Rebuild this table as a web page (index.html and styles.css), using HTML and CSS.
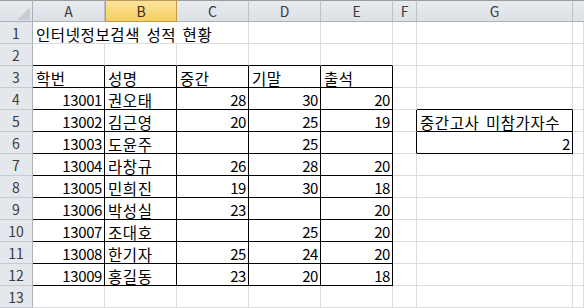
FILE: index.html
```html
<!DOCTYPE html>
<html lang="ko">
<head>
<meta charset="utf-8">
<title>성적 현황</title>
<link rel="stylesheet" href="styles.css">
</head>
<body>
<div class="sheet">
  <!-- column headers -->
  <div class="corner"><span class="tri"></span></div>
  <div class="ch">A</div><div class="ch sel">B</div><div class="ch">C</div><div class="ch">D</div><div class="ch">E</div><div class="ch">F</div><div class="ch">G</div><div class="ch last"></div>

  <!-- row 1 -->
  <div class="rh">1</div>
  <div class="cell title">인터넷정보검색 성적 현황</div><div class="cell"></div><div class="cell"></div><div class="cell"></div><div class="cell"></div><div class="cell"></div>

  <!-- row 2 -->
  <div class="rh">2</div>
  <div class="cell line-b"></div><div class="cell line-b"></div><div class="cell line-b"></div><div class="cell line-b"></div><div class="cell line-b"></div><div class="cell"></div><div class="cell"></div><div class="cell"></div>

  <!-- row 3 -->
  <div class="rh">3</div>
  <div class="cell box">학번</div><div class="cell box">성명</div><div class="cell box">중간</div><div class="cell box">기말</div><div class="cell box">출석</div><div class="cell"></div><div class="cell"></div><div class="cell"></div>

  <!-- row 4 -->
  <div class="rh">4</div>
  <div class="cell box num">13001</div><div class="cell box">권오태</div><div class="cell box num">28</div><div class="cell box num">30</div><div class="cell box num">20</div><div class="cell"></div><div class="cell line-b"></div><div class="cell"></div>

  <!-- row 5 -->
  <div class="rh">5</div>
  <div class="cell box num">13002</div><div class="cell box">김근영</div><div class="cell box num">20</div><div class="cell box num">25</div><div class="cell box num">19</div><div class="cell line-r"></div><div class="cell box">중간고사 미참가자수</div><div class="cell"></div>

  <!-- row 6 -->
  <div class="rh">6</div>
  <div class="cell box num">13003</div><div class="cell box">도윤주</div><div class="cell box num"></div><div class="cell box num">25</div><div class="cell box num"></div><div class="cell line-r"></div><div class="cell box num">2</div><div class="cell"></div>

  <!-- row 7 -->
  <div class="rh">7</div>
  <div class="cell box num">13004</div><div class="cell box">라창규</div><div class="cell box num">26</div><div class="cell box num">28</div><div class="cell box num">20</div><div class="cell"></div><div class="cell"></div><div class="cell"></div>

  <!-- row 8 -->
  <div class="rh">8</div>
  <div class="cell box num">13005</div><div class="cell box">민희진</div><div class="cell box num">19</div><div class="cell box num">30</div><div class="cell box num">18</div><div class="cell"></div><div class="cell"></div><div class="cell"></div>

  <!-- row 9 -->
  <div class="rh">9</div>
  <div class="cell box num">13006</div><div class="cell box">박성실</div><div class="cell box num">23</div><div class="cell box num"></div><div class="cell box num">20</div><div class="cell"></div><div class="cell"></div><div class="cell"></div>

  <!-- row 10 -->
  <div class="rh">10</div>
  <div class="cell box num">13007</div><div class="cell box">조대호</div><div class="cell box num"></div><div class="cell box num">25</div><div class="cell box num">20</div><div class="cell"></div><div class="cell"></div><div class="cell"></div>

  <!-- row 11 -->
  <div class="rh">11</div>
  <div class="cell box num">13008</div><div class="cell box">한기자</div><div class="cell box num">25</div><div class="cell box num">24</div><div class="cell box num">20</div><div class="cell"></div><div class="cell"></div><div class="cell"></div>

  <!-- row 12 -->
  <div class="rh">12</div>
  <div class="cell box num">13009</div><div class="cell box">홍길동</div><div class="cell box num">23</div><div class="cell box num">20</div><div class="cell box num">18</div><div class="cell"></div><div class="cell"></div><div class="cell"></div>

  <!-- row 13 -->
  <div class="rh">13</div>
  <div class="cell"></div><div class="cell"></div><div class="cell"></div><div class="cell"></div><div class="cell"></div><div class="cell"></div><div class="cell"></div><div class="cell"></div>
</div>
</body>
</html>
```

FILE: styles.css
```css
html, body {
  margin: 0;
  padding: 0;
  background: #ffffff;
}

body {
  width: 584px;
  height: 308px;
  overflow: hidden;
  font-family: "Noto Sans CJK KR", "Noto Sans", sans-serif;
}

.sheet {
  display: grid;
  grid-template-columns: 33px repeat(5, 72px) 24px 156px 11px;
  grid-template-rows: repeat(14, 22px);
}

/* header strip */
.corner,
.ch {
  box-sizing: border-box;
  border-top: 1px solid #9c9c9c;
  border-bottom: 1px solid #a9b1bb;
  border-right: 1px solid #bcc2ca;
  background: linear-gradient(#e7eaee, #dde1e6);
}

.corner {
  display: flex;
  justify-content: flex-end;
  align-items: flex-end;
  padding: 0 2px 1px 0;
  border-right-color: #a9b1bb;
}

.tri {
  width: 0;
  height: 0;
  border-left: 13px solid transparent;
  border-bottom: 13px solid #c9cdd2;
}

.ch {
  display: flex;
  align-items: center;
  justify-content: center;
  font-size: 14px;
  color: #3b3b3b;
  line-height: 1;
}

.ch.sel {
  background: linear-gradient(#fbe39a, #f6cf61);
  border: 1px solid #c49a47;
  border-top-color: #b89a5c;
  color: #3a2f14;
}

.ch.last {
  border-right: none;
}

.rh {
  box-sizing: border-box;
  display: flex;
  align-items: center;
  justify-content: center;
  border-right: 1px solid #a9b1bb;
  border-bottom: 1px solid #c4cad2;
  background: #e4e8ed;
  font-size: 14px;
  color: #3b3b3b;
  line-height: 1;
}

/* worksheet cells */
.cell {
  box-sizing: border-box;
  border-right: 1px solid #dadcdd;
  border-bottom: 1px solid #dadcdd;
  padding: 2px 2px 0 3px;
  font-size: 15.5px;
  letter-spacing: 0.6px;
  word-spacing: 1.5px;
  line-height: 20px;
  color: #000000;
  white-space: nowrap;
  overflow: hidden;
}

.cell.title {
  grid-column: span 3;
}

.cell.num {
  text-align: right;
  font-size: 15px;
  letter-spacing: -0.4px;
  word-spacing: 0;
}

.cell.line-b {
  border-bottom-color: #000000;
}

.cell.line-r {
  border-right-color: #000000;
}

.cell.box {
  border-right-color: #000000;
  border-bottom-color: #000000;
}
```
